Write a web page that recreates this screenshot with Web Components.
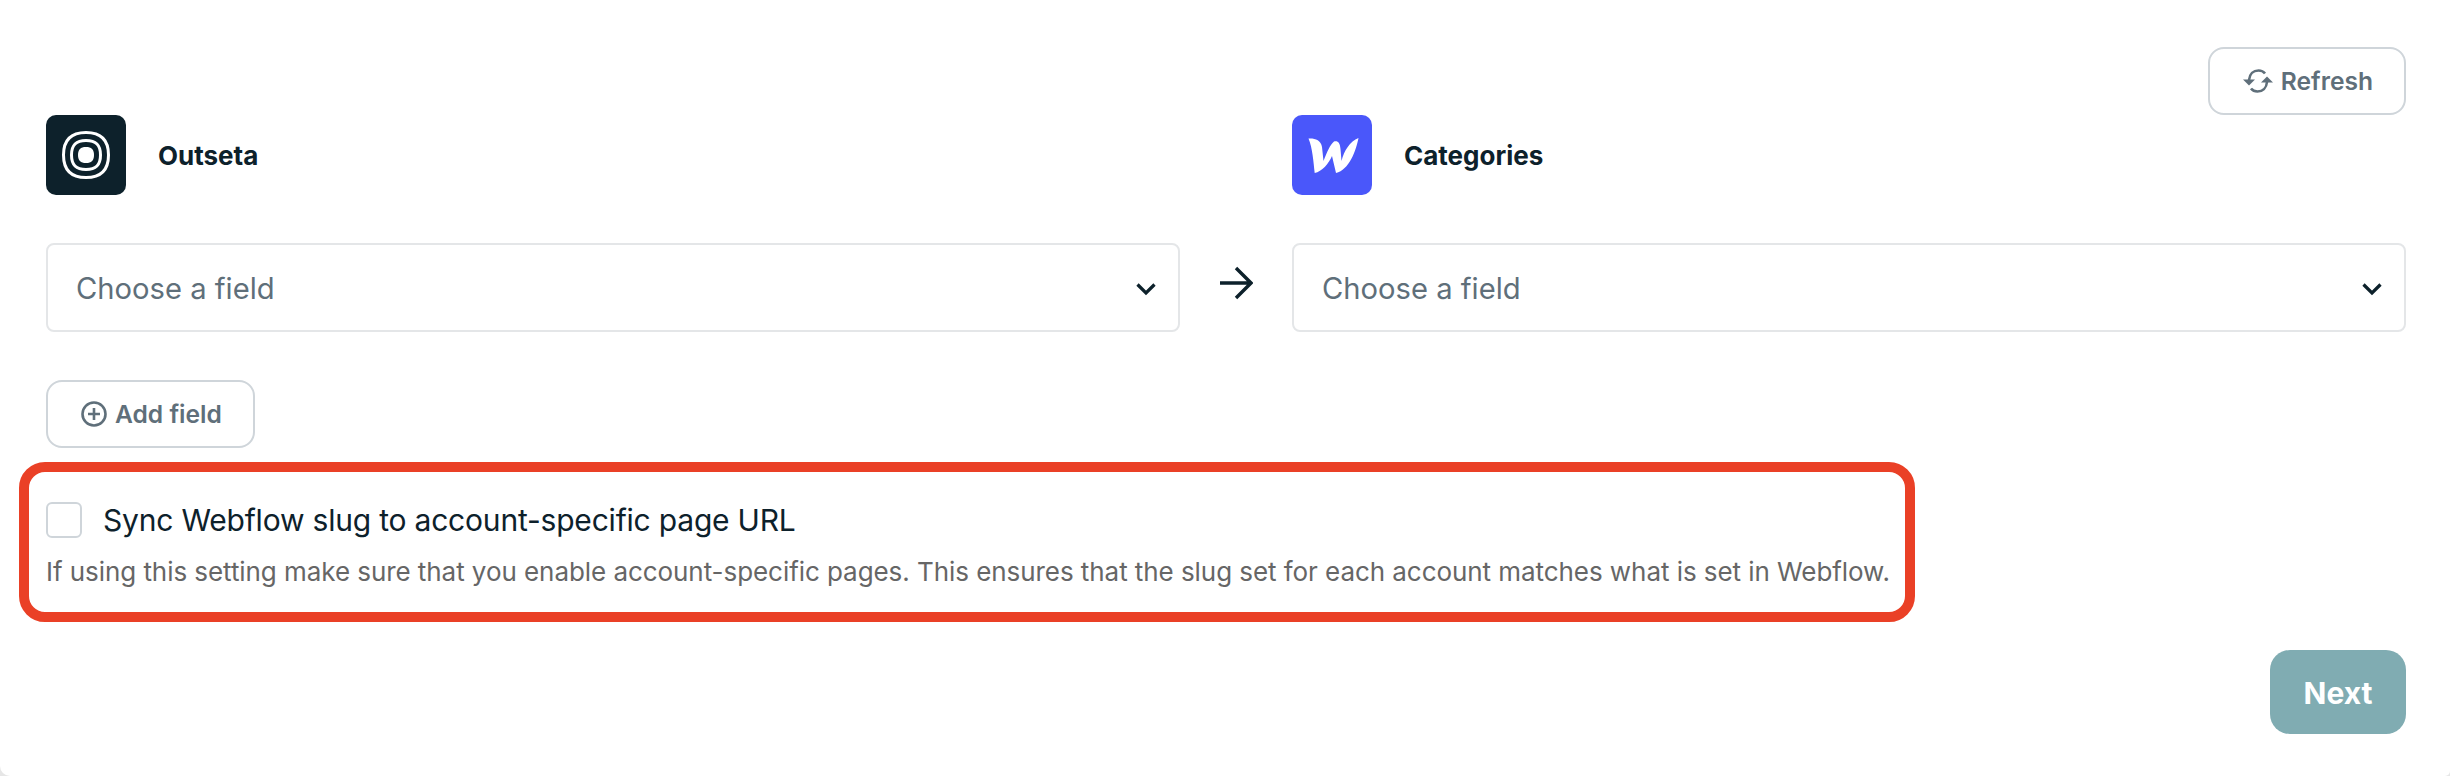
<!DOCTYPE html>
<html lang="en">
<head>
<meta charset="utf-8">
<title>Outseta to Webflow</title>
<style>
    html, body {
        margin: 0;
        background: #e6e6e6;
        font-family: "Inter", "Liberation Sans", sans-serif;
        color: #0d212b;
    }
</style>
</head>
<body>
<mapping-page>
    <action-button slot="refresh" icon="refresh">Refresh</action-button>
    <source-head slot="left-head" logo="outseta" name="Outseta"></source-head>
    <source-head slot="right-head" logo="webflow" name="Categories"></source-head>
    <field-select slot="left-field"></field-select>
    <field-select slot="right-field"></field-select>
    <action-button slot="add" icon="plus">Add field</action-button>
    <sync-option slot="option" hint="If using this setting make sure that you enable account-specific pages. This ensures that the slug set for each account matches what is set in Webflow.">Sync Webflow slug to account-specific page URL</sync-option>
    <next-button slot="next">Next</next-button>
</mapping-page>

<script>
const icons = {
    outseta: `<svg width="80" height="80" viewBox="0 0 80 80" fill="none">
        <path d="M40 17.500C55 17.500 62.500 25 62.500 40S55 62.500 40 62.500 17.500 55 17.500 40 25 17.500 40 17.500Z" stroke="#fff" stroke-width="3"/>
        <path d="M40 25.500C50 25.500 54.500 30 54.500 40S50 54.500 40 54.500 25.500 50 25.500 40 30 25.500 40 25.500Z" stroke="#fff" stroke-width="3"/>
        <path d="M40 32C45.500 32 48 34.500 48 40S45.500 48 40 48 32 45.500 32 40 34.500 32 40 32Z" fill="#fff"/>
    </svg>`,
    webflow: `<svg width="80" height="80" viewBox="0 0 80 80">
        <path fill="#fff" d="M16.500 23.500C22 23 29 24.500 30 32L31.500 46C35 37 38 30 42 26.500C46 25.500 48 28 48.500 34L49.500 46C52 36 58 26 66.500 23C64 36 57 55 44 58L40 41C36.500 49 30 56.500 22.700 58C21.500 47 20.500 33 16.500 23.500Z"/>
    </svg>`,
    refresh: `<svg width="30" height="26" viewBox="0 0 30 26" fill="none" stroke="currentColor" stroke-width="2.600">
        <path d="M6 12C6.500 6 10.500 2.500 15.500 2.500C18.500 2.500 20.500 3.500 22 5.500"/>
        <path d="M24 14C23.500 20 19.500 23.500 14.500 23.500C11.500 23.500 9.500 22.500 8 20.500"/>
        <path d="M0 11.500H12L6 17.500Z" fill="currentColor" stroke="none"/>
        <path d="M30 14.500H18L24 8.500Z" fill="currentColor" stroke="none"/>
    </svg>`,
    plus: `<svg width="26" height="26" viewBox="0 0 26 26" fill="none" stroke="currentColor" stroke-width="2.600">
        <circle cx="13" cy="13" r="11.500"/>
        <path d="M13 7V19M7 13H19"/>
    </svg>`
};

class MappingPage extends HTMLElement {
    constructor() {
        super();
        this.attachShadow({ mode: 'open' });
        this.shadowRoot.innerHTML = `
            <style>
                :host {
                    display: block;
                    box-sizing: border-box;
                    height: 776px;
                    padding: 47px 44px 0 46px;
                    background: #fff;
                    border-radius: 0 0 5px 10px;
                }
                .top {
                    display: flex;
                    justify-content: flex-end;
                }
                .grid {
                    display: grid;
                    grid-template-columns: 1134px 112px 1fr;
                    row-gap: 48px;
                    align-items: center;
                }
                .arrow {
                    display: flex;
                    justify-content: center;
                    margin-top: -9px;
                    color: #0d212b;
                }
                .add {
                    margin-top: 48px;
                }
                .option {
                    margin: 14px 0 0 -27px;
                }
                .bottom {
                    display: flex;
                    justify-content: flex-end;
                    margin-top: 28px;
                }
            </style>
            <div class="top"><slot name="refresh"></slot></div>
            <div class="grid">
                <slot name="left-head"></slot>
                <span></span>
                <slot name="right-head"></slot>
                <slot name="left-field"></slot>
                <span class="arrow">
                    <svg width="34" height="34" viewBox="0 0 34 34" fill="none" stroke="currentColor" stroke-width="3.400">
                        <path d="M1 17H31M17 2L32 17L17 32"/>
                    </svg>
                </span>
                <slot name="right-field"></slot>
            </div>
            <div class="add"><slot name="add"></slot></div>
            <div class="option"><slot name="option"></slot></div>
            <div class="bottom"><slot name="next"></slot></div>
        `;
    }
}

class SourceHead extends HTMLElement {
    constructor() {
        super();
        this.attachShadow({ mode: 'open' });
    }

    connectedCallback() {
        const logo = this.getAttribute('logo');
        this.shadowRoot.innerHTML = `
            <style>
                :host {
                    display: flex;
                    align-items: center;
                    gap: 32px;
                }
                .logo {
                    width: 80px;
                    height: 80px;
                    border-radius: 10px;
                    background: ${logo === 'webflow' ? '#4a57fa' : '#0d212b'};
                }
                .logo svg {
                    display: block;
                }
                .name {
                    font-size: 26px;
                    font-weight: 700;
                    color: #0d212b;
                }
            </style>
            <div class="logo">${icons[logo]}</div>
            <span class="name">${this.getAttribute('name')}</span>
        `;
    }
}

class FieldSelect extends HTMLElement {
    constructor() {
        super();
        this.attachShadow({ mode: 'open' });
        this.shadowRoot.innerHTML = `
            <style>
                :host {
                    display: flex;
                    box-sizing: border-box;
                    height: 89px;
                    align-items: center;
                    justify-content: space-between;
                    padding: 2px 22px 0 28px;
                    border: 2px solid #e4e6e8;
                    border-radius: 8px;
                    font-size: 29.2px;
                    color: #5f6f7a;
                }
            </style>
            <span>Choose a field</span>
            <svg width="20" height="14" viewBox="0 0 20 14" fill="none" stroke="#0d212b" stroke-width="3.200">
                <path d="M1.500 2.500L10 11L18.500 2.500"/>
            </svg>
        `;
    }
}

class ActionButton extends HTMLElement {
    constructor() {
        super();
        this.attachShadow({ mode: 'open' });
    }

    connectedCallback() {
        this.shadowRoot.innerHTML = `
            <style>
                :host {
                    display: inline-flex;
                    box-sizing: border-box;
                    height: 68px;
                    align-items: center;
                    gap: 8px;
                    padding: 0 31px 0 33px;
                    border: 2px solid #cfd5da;
                    border-radius: 16px;
                    font-size: 24.6px;
                    font-weight: 600;
                    color: #5f6f7a;
                }
                svg {
                    display: block;
                }
            </style>
            ${icons[this.getAttribute('icon')]}
            <slot></slot>
        `;
    }
}

class SyncOption extends HTMLElement {
    constructor() {
        super();
        this.attachShadow({ mode: 'open' });
    }

    connectedCallback() {
        this.shadowRoot.innerHTML = `
            <style>
                :host {
                    display: block;
                    box-sizing: border-box;
                    width: 1896px;
                    height: 160px;
                    padding: 30px 0 0 17px;
                    border: 10px solid #ea4026;
                    border-radius: 26px;
                }
                .row {
                    display: flex;
                    align-items: center;
                    gap: 21px;
                    font-size: 30px;
                    letter-spacing: -0.2px;
                    color: #0d212b;
                }
                .box {
                    box-sizing: border-box;
                    width: 36px;
                    height: 36px;
                    border: 2px solid #cfd5da;
                    border-radius: 6px;
                }
                .hint {
                    margin-top: 18px;
                    font-size: 26px;
                    letter-spacing: -0.06px;
                    color: #666;
                    white-space: nowrap;
                }
            </style>
            <div class="row"><span class="box"></span><span><slot></slot></span></div>
            <div class="hint">${this.getAttribute('hint')}</div>
        `;
    }
}

class NextButton extends HTMLElement {
    constructor() {
        super();
        this.attachShadow({ mode: 'open' });
        this.shadowRoot.innerHTML = `
            <style>
                :host {
                    display: inline-flex;
                    box-sizing: border-box;
                    width: 136px;
                    height: 84px;
                    align-items: center;
                    justify-content: center;
                    padding-top: 2px;
                    border-radius: 20px;
                    background: #80acb2;
                    color: #fff;
                    font-size: 30px;
                    font-weight: 700;
                }
            </style>
            <slot></slot>
        `;
    }
}

customElements.define('mapping-page', MappingPage);
customElements.define('source-head', SourceHead);
customElements.define('field-select', FieldSelect);
customElements.define('action-button', ActionButton);
customElements.define('sync-option', SyncOption);
customElements.define('next-button', NextButton);
</script>
</body>
</html>
